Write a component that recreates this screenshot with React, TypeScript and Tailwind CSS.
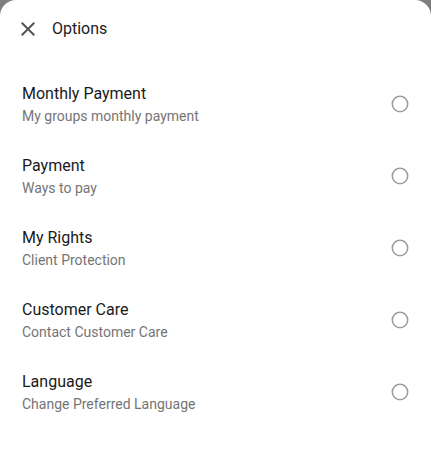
import React from 'react';

type Option = {
  title: string;
  subtitle: string;
};

const options: Option[] = [
  { title: 'Monthly Payment', subtitle: 'My groups monthly payment' },
  { title: 'Payment', subtitle: 'Ways to pay' },
  { title: 'My Rights', subtitle: 'Client Protection' },
  { title: 'Customer Care', subtitle: 'Contact Customer Care' },
  { title: 'Language', subtitle: 'Change Preferred Language' },
];

function CloseIcon() {
  return (
    <svg viewBox="0 0 24 24" className="w-6 h-6" fill="#555555">
      <path d="M19 6.41L17.59 5 12 10.59 6.41 5 5 6.41 10.59 12 5 17.59 6.41 19 12 13.41 17.59 19 19 17.59 13.41 12z" />
    </svg>
  );
}

function RadioIcon() {
  return (
    <svg viewBox="0 0 20 20" className="w-5 h-5">
      <circle cx="10" cy="10" r="7.7" fill="none" stroke="#9e9e9e" strokeWidth="1.6" />
    </svg>
  );
}

export default function App() {
  return (
    <div
      className="min-h-screen bg-[#7f7f7f]"
      style={{ fontFamily: 'Roboto, "Liberation Sans", sans-serif' }}
    >
      <div className="h-[462px] bg-white rounded-t-2xl">
        {/* Header */}
        <div className="h-14 pt-[2px] flex items-center pl-4 gap-3">
          <button className="flex items-center justify-center">
            <CloseIcon />
          </button>
          <h1 className="text-base text-[#212121]">Options</h1>
        </div>

        {/* Options list */}
        <ul className="pt-3">
          {options.map(option => (
            <li
              key={option.title}
              className="h-[72px] flex items-center justify-between pl-[22px] pr-[21px]"
            >
              <div className="mt-[2px]">
                <p className="text-base leading-[22px] text-[#1a1a1a]">{option.title}</p>
                <p className="text-sm leading-[22px] text-[#757575]">{option.subtitle}</p>
              </div>
              <RadioIcon />
            </li>
          ))}
        </ul>
      </div>
    </div>
  );
}
